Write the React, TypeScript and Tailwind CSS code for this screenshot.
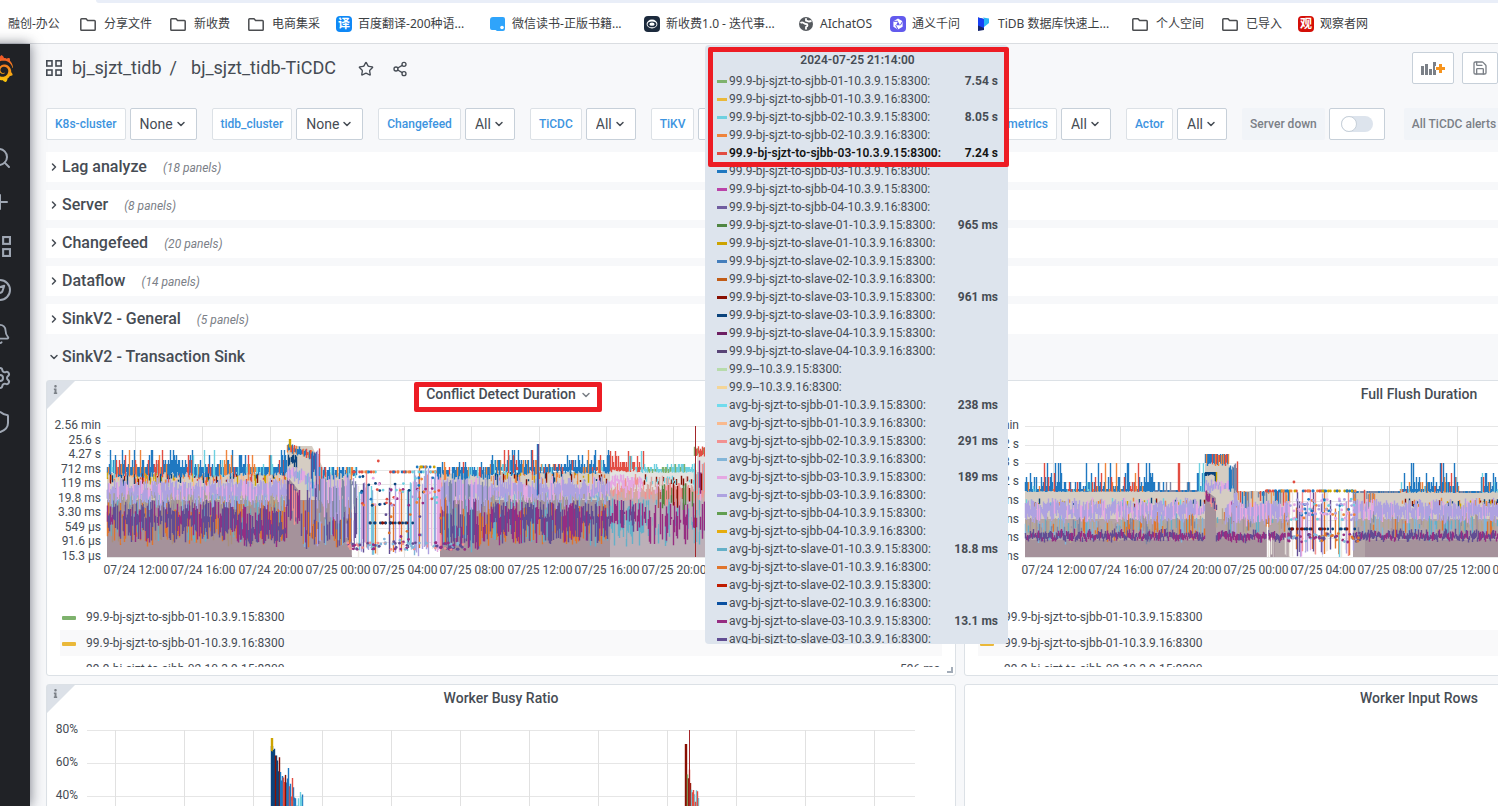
import type { ReactNode } from "react";
import { Bell, ChevronDown, ChevronRight, Compass, Plus, Save, Search, Settings, Share2, Shield, Star } from "lucide-react";
import { FaInfo } from "react-icons/fa";
import { SiGrafana } from "react-icons/si";

/* ---------- chart helpers ---------- */

type Strip = {
  from: number
  to: number
  top: number[]
  bottom: [number, number]
  colors: string[]
  density?: number
  slope?: number
  flat?: boolean
}

type Dots = { from: number; to: number; ys: number[]; colors: string[]; count: number; jitter?: number }

type Area = { points: string; color: string }

function makeRandom(seed: number) {
  let a = seed
  return () => {
    a = (a + 0x6d2b79f5) | 0
    let t = Math.imul(a ^ (a >>> 15), 1 | a)
    t = (t + Math.imul(t ^ (t >>> 7), 61 | t)) ^ t
    return ((t ^ (t >>> 14)) >>> 0) / 4294967296
  }
}

// one vertical stroke per pixel column, grouped by colour
function stripPaths(s: Strip, seed: number) {
  const rnd = makeRandom(seed)
  const paths: Record<string, string> = {}
  for (let x = s.from; x < s.to; x++) {
    if (rnd() > (s.density ?? 1)) continue
    const color = s.colors[Math.floor(rnd() * s.colors.length)]
    const drop = (s.slope ?? 0) * (x - s.from) + (s.flat ? 0 : (rnd() - 0.5) * 5)
    const top = s.top[Math.floor(rnd() * s.top.length)] + drop
    const bottom = s.bottom[0] + rnd() * (s.bottom[1] - s.bottom[0]) + drop
    paths[color] = (paths[color] ?? "") + `M${x + 0.5} ${top.toFixed(1)}V${Math.min(131, Math.max(bottom, top + 2)).toFixed(1)}`
  }
  return Object.entries(paths)
}

function Plot({ areas = [], strips = [], dots = [] }: { areas?: Area[]; strips?: Strip[]; dots?: Dots[] }) {
  return (
    <>
      {areas.map((a, i) => <polygon key={i} points={a.points} fill={a.color} />)}
      {strips.map((s, i) => (
        <g key={i}>
          {stripPaths(s, 97 + i * 31).map(([color, d]) => <path key={color} d={d} stroke={color} strokeWidth="1.4" fill="none" />)}
        </g>
      ))}
      {dots.map((group, i) => {
        const rnd = makeRandom(500 + i * 13)
        return (
          <g key={i}>
            {Array.from({ length: group.count }, (_, k) => (
              <circle
                key={k}
                cx={group.from + rnd() * (group.to - group.from)}
                cy={group.ys[Math.floor(rnd() * group.ys.length)] + (rnd() - 0.5) * (group.jitter ?? 0)}
                r="1.4"
                fill={group.colors[Math.floor(rnd() * group.colors.length)]}
              />
            ))}
          </g>
        )
      })}
    </>
  )
}

/* ---------- chart data ---------- */

const BLUE = "#1f78c1"
const RED = "#e24d42"
const ORANGE = "#ef843c"
const RUST = "#e0752d"
const CYAN = "#6ed0e0"
const SKY = "#82b5d8"
const TEAL = "#64b0c8"
const GREEN = "#7eb26d"
const GOLD = "#cca300"
const NAVY = "#0a437c"
const MAROON = "#890f02"
const PLUM = "#962d82"
const VIOLET = "#614d93"
const LILAC = "#aea2e0"
const PINK = "#e5a8e2"
const SALMON = "#f29191"
const BEIGE = "#d5cdc3"
const MAUVE = "#a5929b"
const STEEL = "#7c88a5"
const PALE = "#ece7e0"

const topColors = [BLUE, BLUE, BLUE, BLUE, BLUE, BLUE, RED, ORANGE, CYAN]
const gapColors = [LILAC, LILAC, PINK, CYAN, RUST, VIOLET, SKY, SALMON, PALE, PALE, PALE]

const conflictAreas: Area[] = [
  { points: "0,47 180,47 180,20 205,20 218,46 245,48 245,131 0,131", color: BEIGE },
  { points: "333,48 383,46 503,46 503,131 333,131", color: BEIGE },
  { points: "503,44 590,44 590,26 598,26 598,131 503,131", color: "#e2e3e0" },
  { points: "0,74 180,74 180,50 193,66 193,74 245,74 245,131 0,131", color: MAUVE },
  { points: "333,74 503,74 503,131 333,131", color: MAUVE },
  { points: "503,66 590,66 590,46 598,46 598,131 503,131", color: "#bcb0b8" },
]

const conflictStrips: Strip[] = [
  // steady region
  { from: 0, to: 180, top: [76, 84, 90], bottom: [104, 118], colors: [RUST, RUST, TEAL, "#a78f7c", MAUVE], density: 0.75 },
  { from: 0, to: 130, top: [74, 78, 84, 90], bottom: [90, 116], colors: [PLUM, VIOLET, VIOLET], density: 0.92 },
  { from: 130, to: 180, top: [80, 88, 96, 102], bottom: [106, 120], colors: [PLUM, VIOLET, VIOLET] },
  { from: 0, to: 180, top: [64, 68], bottom: [70, 84], colors: [SKY, "#b5a68f", "#9c9a9d", LILAC, "#b5a68f"], density: 0.8 },
  { from: 0, to: 180, top: [46, 48, 52], bottom: [50, 60], colors: [ORANGE, RED, MAROON, GOLD, NAVY, BEIGE, BEIGE, "#f9ba8f", "#f9ba8f"], density: 0.8 },
  { from: 0, to: 180, top: [54, 56, 59, 62], bottom: [66, 76], colors: [LILAC, LILAC, LILAC, LILAC, PINK] },
  { from: 0, to: 130, top: [41, 41, 41, 38, 38, 34, 34, 29, 24], bottom: [46, 52], colors: topColors, flat: true },
  { from: 130, to: 172, top: [41, 41, 41, 41, 41, 38, 29], bottom: [46, 50], colors: topColors, flat: true },
  { from: 172, to: 180, top: [41, 34, 29, 24], bottom: [46, 50], colors: topColors, flat: true },
  // restart bump
  { from: 180, to: 193, top: [54, 57], bottom: [70, 92], colors: [PLUM, VIOLET, VIOLET, SALMON], slope: 1 },
  { from: 180, to: 190, top: [30, 32], bottom: [36, 42], colors: [NAVY, NAVY, GOLD, MAROON], density: 0.8 },
  { from: 180, to: 198, top: [42, 44], bottom: [48, 54], colors: [LILAC, LILAC, PINK, SKY], slope: 0.2 },
  { from: 198, to: 212, top: [46, 50], bottom: [52, 66], colors: [LILAC, LILAC, PINK, SKY], slope: 0.8 },
  { from: 180, to: 206, top: [18, 19, 20, 17], bottom: [23, 27], colors: [BLUE, BLUE, BLUE, ORANGE, RED], slope: 0.3, flat: true },
  { from: 182, to: 184, top: [13], bottom: [20, 22], colors: [GOLD], flat: true },
  { from: 204, to: 213, top: [24, 28], bottom: [42, 70], colors: [BLUE, BLUE, VIOLET, LILAC, RED] },
  // fade into the gap
  { from: 193, to: 250, top: [64, 72, 86, 96, 102], bottom: [108, 122], colors: [PLUM, VIOLET, VIOLET, SKY, RUST, LILAC], density: 0.9 },
  { from: 210, to: 250, top: [50, 54, 60], bottom: [70, 96], colors: [LILAC, LILAC, PINK, STEEL], density: 0.95 },
  { from: 212, to: 250, top: [41, 41, 44], bottom: [47, 54], colors: topColors, density: 0.9, flat: true },
  { from: 236, to: 252, top: [60, 112], bottom: [129, 131], colors: ["#ffffff", PALE], density: 0.3 },
  { from: 250, to: 262, top: [46, 52, 58, 64], bottom: [112, 131], colors: gapColors, density: 0.7 },
  { from: 262, to: 304, top: [46, 58, 64, 80], bottom: [120, 131], colors: gapColors, density: 0.38 },
  { from: 304, to: 336, top: [44, 50, 58], bottom: [118, 131], colors: [LILAC, LILAC, PINK, SKY, RUST, SALMON, PALE, "#ffffff"], density: 0.7 },
  // recovery
  { from: 333, to: 383, top: [72, 80, 88, 100], bottom: [106, 124], colors: [PLUM, VIOLET, VIOLET, RUST, TEAL] },
  { from: 333, to: 383, top: [52, 56, 60], bottom: [68, 88], colors: [LILAC, LILAC, LILAC, PINK, STEEL] },
  { from: 330, to: 383, top: [41, 41, 44, 36], bottom: [47, 54], colors: topColors, density: 0.95, flat: true },
  { from: 383, to: 503, top: [76, 84, 90], bottom: [104, 120], colors: [RUST, RUST, TEAL, MAUVE], density: 0.8 },
  { from: 383, to: 503, top: [74, 78, 84, 90], bottom: [92, 118], colors: [PLUM, VIOLET, VIOLET], density: 0.92 },
  { from: 383, to: 503, top: [64, 68], bottom: [70, 82], colors: [SKY, "#b5a68f", "#9c9a9d", LILAC], density: 0.8 },
  { from: 383, to: 503, top: [46, 48, 52], bottom: [50, 60], colors: [ORANGE, MAROON, GOLD, NAVY, BEIGE, BEIGE, BEIGE], density: 0.7 },
  { from: 383, to: 503, top: [52, 56, 59, 62], bottom: [66, 76], colors: [LILAC, LILAC, LILAC, LILAC, PINK] },
  { from: 383, to: 430, top: [41, 38, 34, 34, 29, 24], bottom: [44, 50], colors: topColors, flat: true },
  { from: 430, to: 432, top: [18], bottom: [60, 70], colors: [BLUE, VIOLET], flat: true },
  { from: 432, to: 460, top: [41, 41, 38, 38], bottom: [44, 48], colors: topColors, flat: true },
  { from: 460, to: 503, top: [41, 41, 38, 34, 29, 24], bottom: [44, 48], colors: topColors, flat: true },
  // single node left
  { from: 503, to: 598, top: [74, 82, 90, 96], bottom: [96, 122], colors: [TEAL, TEAL, "#bcb0b8"], density: 0.7 },
  { from: 503, to: 540, top: [76, 82, 88], bottom: [90, 106], colors: [PLUM, PLUM, VIOLET], density: 0.75 },
  { from: 540, to: 598, top: [78, 86, 92], bottom: [92, 120], colors: [PLUM, PLUM, "#bcb0b8"], density: 0.75 },
  { from: 503, to: 598, top: [58, 62, 64], bottom: [66, 76], colors: [SALMON, "#d9a6a0", PINK, "#d9a6a0"] },
  { from: 550, to: 587, top: [58, 64], bottom: [70, 84], colors: [MAROON, "#508642", SALMON, "#b05b4a"], density: 0.6 },
  { from: 503, to: 537, top: [50, 54], bottom: [56, 66], colors: [PINK, PINK, PINK, SALMON] },
  { from: 537, to: 587, top: [50, 53], bottom: [55, 60], colors: [MAROON, CYAN, "#d9a6a0"], density: 0.6 },
  { from: 503, to: 537, top: [41, 41, 36, 30, 25], bottom: [43, 47], colors: [RED, RED, RED, CYAN], flat: true },
  { from: 537, to: 587, top: [41, 41, 43, 38], bottom: [45, 47], colors: [CYAN, CYAN, CYAN, GREEN], flat: true },
  { from: 587, to: 598, top: [22, 24], bottom: [27, 32], colors: [RED, RED, GREEN] },
  { from: 587, to: 598, top: [36, 46], bottom: [56, 70], colors: [MAROON, CYAN, SALMON, PLUM] },
]

const dotColors = [RED, BLUE, CYAN, ORANGE, PLUM, NAVY, PINK, LILAC]

const conflictDots: Dots[] = [
  { from: 245, to: 333, ys: [46], colors: [RED, RED, BLUE, ORANGE, CYAN], count: 36 },
  { from: 304, to: 330, ys: [41], colors: [BLUE, ORANGE, GOLD], count: 8 },
  { from: 250, to: 333, ys: [52, 58, 64, 66, 72, 78], colors: dotColors, count: 66, jitter: 3 },
  { from: 262, to: 306, ys: [97], colors: [NAVY, MAROON, NAVY], count: 20 },
  { from: 262, to: 340, ys: [91, 108, 116], colors: [PLUM, VIOLET, RUST, SKY], count: 16, jitter: 6 },
  { from: 240, to: 360, ys: [120], colors: [VIOLET, PLUM, VIOLET, SKY, SALMON], count: 90, jitter: 7 },
  { from: 268, to: 272, ys: [35], colors: [RED], count: 1 },
]

const flushAreas: Area[] = [
  { points: "0,65 180,65 180,38 204,38 212,65 265,65 265,131 0,131", color: BEIGE },
  { points: "328,65 473,65 473,131 328,131", color: BEIGE },
  { points: "0,93 265,93 265,131 0,131", color: "#b3a5a8" },
  { points: "328,93 473,93 473,131 328,131", color: "#b3a5a8" },
  { points: "0,114 180,114 180,64 191,72 191,112 250,114 250,131 0,131", color: MAUVE },
  { points: "340,114 473,114 473,131 340,131", color: MAUVE },
]

const flushMid = [RUST, SKY, "#b5a68f", "#b5a68f", MAUVE, STEEL, TEAL]
const flushSpikes = [63, 63, 60, 60, 56, 56, 51, 47, 37]

const flushStrips: Strip[] = [
  { from: 0, to: 180, top: [88, 93, 96, 102], bottom: [102, 116], colors: flushMid, density: 0.75 },
  { from: 0, to: 180, top: [74, 76], bottom: [77, 82], colors: [GOLD, NAVY, MAROON, ORANGE, CYAN], density: 0.35 },
  { from: 0, to: 180, top: [74, 77, 79, 82], bottom: [86, 96], colors: [LILAC, LILAC, LILAC, LILAC, PINK] },
  { from: 0, to: 180, top: [105, 107, 109], bottom: [112, 114], colors: [VIOLET, VIOLET, PLUM] },
  { from: 0, to: 40, top: flushSpikes, bottom: [65, 66], colors: topColors, flat: true },
  { from: 40, to: 70, top: [63, 63, 56], bottom: [65, 66], colors: topColors, flat: true },
  { from: 58, to: 130, top: flushSpikes, bottom: [65, 66], colors: topColors, flat: true },
  { from: 130, to: 172, top: [64, 64, 64, 64, 64, 64, 64, 56], bottom: [65, 66], colors: [BLUE, STEEL, STEEL], flat: true },
  { from: 153, to: 155, top: [37], bottom: [65, 66], colors: [RED], flat: true },
  { from: 172, to: 180, top: [60, 47, 37], bottom: [65, 66], colors: [BLUE, BLUE, CYAN], flat: true },
  { from: 180, to: 204, top: [28, 28, 29], bottom: [36, 40], colors: [BLUE, BLUE, BLUE, BLUE, RED, ORANGE], flat: true },
  { from: 180, to: 190, top: [46], bottom: [48, 50], colors: [NAVY], flat: true },
  { from: 190, to: 192, top: [46], bottom: [56, 58], colors: [NAVY, GOLD], flat: true },
  { from: 180, to: 206, top: [55, 58], bottom: [60, 66], colors: [LILAC, LILAC, PINK] },
  { from: 180, to: 192, top: [64, 66], bottom: [68, 74], colors: [PLUM, VIOLET, SALMON], slope: 1 },
  { from: 204, to: 213, top: [37, 42], bottom: [60, 70], colors: [BLUE, BLUE, STEEL, RED] },
  { from: 206, to: 213, top: [68, 76], bottom: [88, 108], colors: [LILAC, PLUM, LILAC] },
  { from: 191, to: 265, top: [82, 88, 93], bottom: [96, 108], colors: flushMid, density: 0.5 },
  { from: 213, to: 265, top: [65, 66], bottom: [67, 84], colors: [BLUE, ORANGE, STEEL, RED, BEIGE], density: 0.8, flat: true },
  { from: 200, to: 265, top: [76, 80], bottom: [86, 98], colors: [LILAC, LILAC, PINK] },
  { from: 191, to: 268, top: [106, 108], bottom: [112, 115], colors: [VIOLET, PLUM] },
  { from: 240, to: 265, top: [96, 114], bottom: [129, 131], colors: ["#ffffff", PALE, "#c5b9bd"], density: 0.45 },
  { from: 265, to: 330, top: [66, 76, 84], bottom: [124, 131], colors: [...gapColors, "#ffffff", PALE], density: 0.36 },
  { from: 328, to: 375, top: [88, 93, 100], bottom: [102, 114], colors: flushMid, density: 0.5 },
  { from: 328, to: 375, top: [65], bottom: [66, 67], colors: [STEEL, STEEL, BLUE], flat: true },
  { from: 328, to: 350, top: [66], bottom: [72, 100], colors: [STEEL, ORANGE, BEIGE, RED], density: 0.5 },
  { from: 372, to: 473, top: [88, 93, 96], bottom: [100, 114], colors: flushMid, density: 0.75 },
  { from: 375, to: 473, top: [74, 76], bottom: [77, 82], colors: [GOLD, NAVY, MAROON, ORANGE], density: 0.35 },
  { from: 328, to: 473, top: [74, 77, 79, 82], bottom: [86, 96], colors: [LILAC, LILAC, LILAC, LILAC, PINK] },
  { from: 328, to: 473, top: [105, 107, 109], bottom: [112, 114], colors: [VIOLET, VIOLET, PLUM] },
  { from: 375, to: 434, top: flushSpikes, bottom: [65, 67], colors: topColors, flat: true },
  { from: 434, to: 456, top: [65], bottom: [66, 67], colors: [STEEL, BLUE], flat: true },
  { from: 456, to: 473, top: flushSpikes, bottom: [65, 67], colors: topColors, flat: true },
]

const flushDots: Dots[] = [
  { from: 240, to: 332, ys: [65], colors: [RED, BLUE, ORANGE, BLUE, GOLD], count: 50 },
  { from: 262, to: 330, ys: [74, 79, 84, 88, 93], colors: [LILAC, LILAC, CYAN, PINK, PINK, ORANGE, BLUE], count: 90, jitter: 2 },
  { from: 262, to: 335, ys: [103], colors: [NAVY, NAVY, MAROON], count: 24 },
  { from: 262, to: 335, ys: [110, 113], colors: [VIOLET, PLUM, RUST, SKY], count: 60, jitter: 6 },
  { from: 268, to: 271, ys: [56], colors: [RED], count: 1 },
]

const busyStrips: Strip[] = [
  { from: 184, to: 186, top: [16], bottom: [130, 131], colors: [NAVY], flat: true },
  { from: 184, to: 186, top: [8], bottom: [16, 30], colors: [GOLD, MAROON], flat: true },
  { from: 186, to: 193, top: [16, 22, 30], bottom: [130, 131], colors: [NAVY, MAROON, NAVY, MAROON, "#2f575e"], slope: 2 },
  { from: 193, to: 203, top: [32, 42, 48], bottom: [130, 131], colors: [MAROON, RED, BLUE, "#508642", BLUE], slope: 1 },
  { from: 203, to: 217, top: [54, 62, 68], bottom: [130, 131], colors: [BLUE, BLUE, BLUE, RED, CYAN], slope: 1 },
  { from: 205, to: 206, top: [48], bottom: [130, 131], colors: [RED], flat: true },
  { from: 598, to: 600, top: [14], bottom: [130, 131], colors: [MAROON], flat: true },
  { from: 600, to: 604, top: [36, 44], bottom: [130, 131], colors: [MAROON, GREEN, RED], slope: 3 },
  { from: 604, to: 612, top: [56, 60, 66], bottom: [130, 131], colors: [RED, RED, CYAN, GREEN], slope: 1 },
]

const timeLabels = [
  "07/24 12:00", "07/24 16:00", "07/24 20:00", "07/25 00:00", "07/25 04:00", "07/25 08:00",
  "07/25 12:00", "07/25 16:00", "07/25 20:00",
]

type ChartProps = {
  name: string
  yLabels: string[]
  rowGap: number
  left: number
  labelGap: number
  width: number
  tickGap: number
  ticks: number
  times?: string[]
  crosshair?: number
  children: ReactNode
}

function Chart({ name, yLabels, rowGap, left, labelGap, width, tickGap, ticks, times = [], crosshair, children }: ChartProps) {
  const height = 131
  return (
    <svg role="img" aria-label={name} className="block w-full h-[195px] text-xs fill-[#464c54]">
      {yLabels.map((label, i) => (
        <text key={label} x={left - labelGap} y={20 + Math.round(i * rowGap)} textAnchor="end">{label}</text>
      ))}
      <g transform={`translate(${left} 17)`}>
        {yLabels.map((label, i) => (
          <path key={label} d={`M0 ${Math.round(i * rowGap) + 0.5}H${width}`} stroke="#e6e6e6" />
        ))}
        {Array.from({ length: ticks }, (_, i) => (
          <path key={i} d={`M${Math.round(28 + i * tickGap) + 0.5} 0V${height}`} stroke="#e1e1e1" />
        ))}
        {children}
        {crosshair && <path d={`M${crosshair + 0.5} 0V${height}`} stroke="#a3262a" />}
      </g>
      {times.map((time, i) => (
        <text key={time} x={left + Math.round(29 + i * tickGap)} y="165" textAnchor="middle">{time}</text>
      ))}
    </svg>
  )
}

/* ---------- small pieces ---------- */

function AppsIcon({ size }: { size: number }) {
  return (
    <svg width={size} height={size} viewBox="0 0 16 16" fill="none" stroke="currentColor" strokeWidth="1.6">
      <rect x="0.8" y="0.8" width="5.2" height="5.2" />
      <rect x="10" y="0.8" width="5.2" height="5.2" />
      <rect x="0.8" y="10" width="5.2" height="5.2" />
      <rect x="10" y="10" width="5.2" height="5.2" />
    </svg>
  )
}

const folder = (
  <span className="w-5 flex justify-center">
    <svg width="16" height="13" viewBox="0 0 16 13" fill="none" stroke="#4b4d50" strokeWidth="1.5">
      <path d="M0.8 11.4V1.6Q0.8 0.8 1.6 0.8H6L7.6 2.6H14.4Q15.2 2.6 15.2 3.4V11.4Q15.2 12.2 14.4 12.2H1.6Q0.8 12.2 0.8 11.4Z" />
    </svg>
  </span>
)

const bookmarks: { label: string; icon?: ReactNode; width?: string }[] = [
  { label: "融创-办公", width: "w-[54px]" },
  { label: "分享文件", icon: folder },
  { label: "新收费", icon: folder },
  { label: "电商集采", icon: folder },
  {
    label: "百度翻译-200种语...",
    width: "w-[138px]",
    icon: <span className="size-4 rounded-sm bg-[#0f88f6] text-white font-bold text-xs leading-4 text-center">译</span>,
  },
  {
    label: "微信读书-正版书籍...",
    width: "w-[138px]",
    icon: (
      <svg width="16" height="16" viewBox="0 0 16 16">
        <path d="M3 1H13Q15 1 15 3V13Q15 15 13 15H7L5.5 14H2Q0 14 0 12V4Q0 1 3 1Z" fill="#2fa4fb" />
        <circle cx="12" cy="11.5" r="1.8" fill="#fff" />
      </svg>
    ),
  },
  {
    label: "新收费1.0 - 迭代事...",
    width: "w-[138px]",
    icon: (
      <svg width="16" height="16" viewBox="0 0 16 16">
        <rect width="16" height="16" rx="4" fill="#1c2a3d" />
        <ellipse cx="8" cy="8" rx="5.4" ry="4.4" fill="#fff" />
        <ellipse cx="8" cy="8.4" rx="4.4" ry="2.8" fill="#1c2a3d" />
        <ellipse cx="8" cy="8.2" rx="2.6" ry="1.6" fill="#fff" />
      </svg>
    ),
  },
  {
    label: "AIchatOS",
    width: "w-[76px]",
    icon: (
      <svg width="16" height="16" viewBox="0 0 16 16">
        <circle cx="8" cy="8" r="7" fill="#55595e" />
        <path d="M2.5 7C5 5 6 8 8 8C10 8 10 10 8 11V13.5" fill="none" stroke="#fff" strokeWidth="1.8" />
        <path d="M8 2.2V4.5L11 5.5L13.5 5" fill="none" stroke="#fff" strokeWidth="1.8" />
      </svg>
    ),
  },
  {
    label: "通义千问",
    icon: (
      <svg width="16" height="16" viewBox="0 0 16 16">
        <rect width="16" height="16" rx="4" fill="#625aed" />
        <path d="M8 2.6L12.6 5.3V10.7L8 13.4L3.4 10.7V5.3Z" fill="#fff" />
        <path d="M8 5.5L10 9.2H6Z" fill="#625aed" />
        <path d="M3.4 5.3H8M12.6 5.3L10.3 9.3M8 13.4L5.6 9.4" stroke="#625aed" />
      </svg>
    ),
  },
  {
    label: "TiDB 数据库快速上...",
    width: "w-[138px]",
    icon: (
      <svg width="16" height="16" viewBox="0 0 16 16">
        <path d="M2 1.5L8 3V14L2 15Z" fill="#16256e" />
        <path d="M2 1.5L8 3V12L2 9.5Z" fill="#1740f5" />
        <path d="M7 1.5L13 2.5V7L8 11V3Z" fill="#28b6f6" />
      </svg>
    ),
  },
  { label: "个人空间", icon: folder },
  { label: "已导入", icon: folder },
  {
    label: "观察者网",
    icon: <span className="size-4 rounded-sm bg-[#d40f07] text-white font-bold text-xs leading-4 text-center">观</span>,
  },
]

function BookmarkBar() {
  return (
    <nav className="shrink-0 h-11 bg-white border-b border-[#dadde1]">
      <div className="h-[3px] ml-24 rounded-bl-full bg-[#e9eef8]" />
      <div className="h-10 pl-2 pt-0.5 flex items-center gap-4 text-xs text-[#3c4043] font-['Noto_Sans','Noto_Sans_CJK_SC',sans-serif]">
        {bookmarks.map(({ label, icon, width = "" }) => (
          <a key={label} href="#" className={`shrink-0 flex items-center gap-1.5 whitespace-nowrap ${width}`}>
            {icon}
            <span>{label}</span>
          </a>
        ))}
      </div>
    </nav>
  )
}

function Sidebar() {
  const icons = [
    { name: "Search", icon: <Search size={24} /> },
    { name: "Create", icon: <Plus size={24} /> },
    { name: "Dashboards", icon: <AppsIcon size={21} /> },
    { name: "Explore", icon: <Compass size={24} /> },
    { name: "Alerting", icon: <Bell size={22} /> },
    { name: "Configuration", icon: <Settings size={24} /> },
    { name: "Server Admin", icon: <Shield size={24} /> },
  ]
  return (
    <aside className="relative z-10 shrink-0 w-[60px] -ml-[30px] bg-[#202226] text-[#9fa7b3] shadow-[0_0_12px_rgba(30,35,50,0.6)]">
      <a href="#" aria-label="Home" className="h-12 mb-11 flex items-center justify-center">
        <svg width="0" height="0">
          <linearGradient id="flame" x1="0" y1="0" x2="0" y2="1">
            <stop offset="0.1" stopColor="#f05a28" />
            <stop offset="1" stopColor="#fbca0a" />
          </linearGradient>
        </svg>
        <SiGrafana size={27} className="fill-[url(#flame)]" />
      </a>
      {icons.map(({ name, icon }) => (
        <button key={name} aria-label={name} className="w-full h-11 flex items-center justify-center">{icon}</button>
      ))}
    </aside>
  )
}

function Header() {
  return (
    <header className="h-12 pl-4 flex items-center text-lg text-[#464c54]">
      <AppsIcon size={16} />
      <a href="#" className="ml-2.5">bj_sjzt_tidb</a>
      <span className="mx-2">/</span>
      <a href="#" className="ml-1.5">bj_sjzt_tidb-TiCDC</a>
      <button aria-label="Mark as favorite" className="ml-[22px] pt-0.5"><Star size={16} /></button>
      <button aria-label="Share dashboard" className="ml-[18px] pt-0.5"><Share2 size={16} /></button>
      <button aria-label="Add panel" className="ml-auto w-[42px] h-8 flex items-center justify-center bg-white border border-[#c7d0d9] rounded-xs">
        <svg width="26" height="16" viewBox="0 0 26 16" fill="#7b8087">
          <path d="M1 6H4V15H1ZM5 4H8V15H5ZM9 9H12V15H9ZM13 2H16V6H15V10H16V15H13Z" />
          <path d="M19 4H22V7H25V10H22V13H19V10H16V7H19Z" fill="#f7941d" />
        </svg>
      </button>
      <button aria-label="Save dashboard" className="ml-2 w-9 h-8 flex items-center justify-center bg-white border border-[#c7d0d9] rounded-xs text-[#7b8087]">
        <Save size={16} />
      </button>
    </header>
  )
}

function Variable({ name, value, className = "" }: { name: string; value: string; className?: string }) {
  return (
    <div className={`shrink-0 flex gap-1 ${className}`}>
      <label htmlFor={name} className="h-8 px-2 flex items-center whitespace-nowrap bg-white border border-[#dce1e6] rounded-xs text-xs font-medium text-[#3d94e0]">
        {name}
      </label>
      <div className="relative">
        <select
          id={name}
          className={`h-8 pl-[9px] appearance-none bg-white border border-[#c7d0d9] rounded-xs text-sm text-[#464c54] ${value === "None" ? "w-[67px]" : "w-[50px]"}`}
        >
          <option>{value}</option>
        </select>
        <ChevronDown size={12} strokeWidth={3} className="absolute right-2.5 top-2.5 pointer-events-none text-[#464c54]" />
      </div>
    </div>
  )
}

function Variables() {
  return (
    <form className="pl-4 mt-4 flex gap-[15px]">
      <Variable name="K8s-cluster" value="None" />
      <Variable name="tidb_cluster" value="None" />
      <Variable name="Changefeed" value="All" />
      <Variable name="TiCDC" value="All" />
      <Variable name="TiKV" value="All" />
      <Variable name="Runtime metrics" value="All" className="ml-[187px]" />
      <Variable name="Actor" value="All" />
      <div className="shrink-0 flex gap-1">
        <label htmlFor="server-down" className="h-8 px-2 flex items-center bg-[#f1f4f8] rounded-xs text-xs font-medium text-[#7b8087]">Server down</label>
        <span className="w-14 h-8 flex items-center justify-center bg-white border border-[#c7d0d9] rounded-xs">
          <input
            id="server-down"
            type="checkbox"
            className="appearance-none w-8 h-4 rounded-full bg-[#dde4ed] flex before:size-4 before:rounded-full before:bg-white before:border before:border-[#c7d0d9]"
          />
        </span>
      </div>
      <label className="shrink-0 ml-1 h-8 px-2 flex items-center bg-[#f1f4f8] rounded-xs text-xs font-medium text-[#7b8087]">All TiCDC alerts</label>
    </form>
  )
}

const rows = [
  { title: "Lag analyze", panels: 18 },
  { title: "Server", panels: 8 },
  { title: "Changefeed", panels: 20 },
  { title: "Dataflow", panels: 14 },
  { title: "SinkV2 - General", panels: 5 },
]

function Panel({ title, info, boxed, children }: { title: string; info?: boolean; boxed?: boolean; children?: ReactNode }) {
  return (
    <section className="relative h-[296px] bg-white border border-[#dce1e6] rounded-[3px]">
      {info && (
        <span className="absolute left-0 top-0 size-7 pl-1 pt-1 bg-[#dce1e8] text-[#7b8087] [clip-path:polygon(0_0,100%_0,0_100%)]">
          <FaInfo size={9} />
        </span>
      )}
      <h2 className="h-7 flex justify-center text-sm leading-[27px] font-medium text-[#464c54]">
        <span className="relative">
          {title}
          {boxed && (
            <>
              <ChevronDown size={12} strokeWidth={3} className="absolute left-full top-2 ml-1 text-[#7b8087]" />
              <span className="absolute -left-3 -right-[26px] top-px h-[30px] border-[5px] border-[#ed1c24] rounded-xs" />
            </>
          )}
        </span>
      </h2>
      {children}
    </section>
  )
}

function Legend({ value }: { value?: string }) {
  const entries = [
    { name: "99.9-bj-sjzt-to-sjbb-01-10.3.9.15:8300", color: "bg-[#7eb26d]" },
    { name: "99.9-bj-sjzt-to-sjbb-01-10.3.9.16:8300", color: "bg-[#eab839]" },
    { name: "99.9-bj-sjzt-to-sjbb-02-10.3.9.15:8300", color: "bg-[#6ed0e0]", value },
  ]
  return (
    <div className="h-[63px] px-[13px] overflow-hidden">
      <table className="w-full text-xs text-[#464c54]">
        <tbody>
          {entries.map((entry) => (
            <tr key={entry.name} className="h-[26px] even:bg-[#f9f9fa]">
              <td className="w-[26px] pl-0.5 pt-0.5"><span className={`block w-3.5 h-1 rounded-[1px] ${entry.color}`} /></td>
              <td>{entry.name}</td>
              <td className="text-right pr-0.5">{entry.value}</td>
            </tr>
          ))}
        </tbody>
      </table>
    </div>
  )
}

const tooltipRows: { name: string; color: string; value?: string; active?: boolean }[] = [
  { name: "99.9-bj-sjzt-to-sjbb-01-10.3.9.15:8300:", color: "bg-[#7eb26d]", value: "7.54 s" },
  { name: "99.9-bj-sjzt-to-sjbb-01-10.3.9.16:8300:", color: "bg-[#eab839]" },
  { name: "99.9-bj-sjzt-to-sjbb-02-10.3.9.15:8300:", color: "bg-[#6ed0e0]", value: "8.05 s" },
  { name: "99.9-bj-sjzt-to-sjbb-02-10.3.9.16:8300:", color: "bg-[#ef843c]" },
  { name: "99.9-bj-sjzt-to-sjbb-03-10.3.9.15:8300:", color: "bg-[#e24d42]", value: "7.24 s", active: true },
  { name: "99.9-bj-sjzt-to-sjbb-03-10.3.9.16:8300:", color: "bg-[#1f78c1]" },
  { name: "99.9-bj-sjzt-to-sjbb-04-10.3.9.15:8300:", color: "bg-[#ba43a9]" },
  { name: "99.9-bj-sjzt-to-sjbb-04-10.3.9.16:8300:", color: "bg-[#705da0]" },
  { name: "99.9-bj-sjzt-to-slave-01-10.3.9.15:8300:", color: "bg-[#508642]", value: "965 ms" },
  { name: "99.9-bj-sjzt-to-slave-01-10.3.9.16:8300:", color: "bg-[#cca300]" },
  { name: "99.9-bj-sjzt-to-slave-02-10.3.9.15:8300:", color: "bg-[#447ebc]" },
  { name: "99.9-bj-sjzt-to-slave-02-10.3.9.16:8300:", color: "bg-[#c15c17]" },
  { name: "99.9-bj-sjzt-to-slave-03-10.3.9.15:8300:", color: "bg-[#890f02]", value: "961 ms" },
  { name: "99.9-bj-sjzt-to-slave-03-10.3.9.16:8300:", color: "bg-[#0a437c]" },
  { name: "99.9-bj-sjzt-to-slave-04-10.3.9.15:8300:", color: "bg-[#6d1f62]" },
  { name: "99.9-bj-sjzt-to-slave-04-10.3.9.16:8300:", color: "bg-[#584477]" },
  { name: "99.9--10.3.9.15:8300:", color: "bg-[#b7dbab]" },
  { name: "99.9--10.3.9.16:8300:", color: "bg-[#f4d598]" },
  { name: "avg-bj-sjzt-to-sjbb-01-10.3.9.15:8300:", color: "bg-[#70dbed]", value: "238 ms" },
  { name: "avg-bj-sjzt-to-sjbb-01-10.3.9.16:8300:", color: "bg-[#f9ba8f]" },
  { name: "avg-bj-sjzt-to-sjbb-02-10.3.9.15:8300:", color: "bg-[#f29191]", value: "291 ms" },
  { name: "avg-bj-sjzt-to-sjbb-02-10.3.9.16:8300:", color: "bg-[#82b5d8]" },
  { name: "avg-bj-sjzt-to-sjbb-03-10.3.9.15:8300:", color: "bg-[#e5a8e2]", value: "189 ms" },
  { name: "avg-bj-sjzt-to-sjbb-03-10.3.9.16:8300:", color: "bg-[#aea2e0]" },
  { name: "avg-bj-sjzt-to-sjbb-04-10.3.9.15:8300:", color: "bg-[#629e51]" },
  { name: "avg-bj-sjzt-to-sjbb-04-10.3.9.16:8300:", color: "bg-[#e5ac0e]" },
  { name: "avg-bj-sjzt-to-slave-01-10.3.9.15:8300:", color: "bg-[#64b0c8]", value: "18.8 ms" },
  { name: "avg-bj-sjzt-to-slave-01-10.3.9.16:8300:", color: "bg-[#e0752d]" },
  { name: "avg-bj-sjzt-to-slave-02-10.3.9.15:8300:", color: "bg-[#bf1b00]" },
  { name: "avg-bj-sjzt-to-slave-02-10.3.9.16:8300:", color: "bg-[#0a50a1]" },
  { name: "avg-bj-sjzt-to-slave-03-10.3.9.15:8300:", color: "bg-[#962d82]", value: "13.1 ms" },
  { name: "avg-bj-sjzt-to-slave-03-10.3.9.16:8300:", color: "bg-[#614d93]" },
]

function GraphTooltip() {
  return (
    <div className="absolute z-20 left-[705px] top-[45px] w-[303px] h-[599px]">
      <div className="h-full pt-1.5 pl-3 pr-2.5 overflow-hidden rounded-[4px] bg-[#dde4ed] text-xs text-[#464c54]">
        <div className="h-[21px] leading-[18px] text-center font-semibold">2024-07-25 21:14:00</div>
        {tooltipRows.map(({ name, color, value, active }) => (
          <div key={name} className={`h-[18px] flex items-center ${active ? "font-semibold text-[#141414]" : ""}`}>
            <span className={`w-2.5 h-[3px] mr-0.5 ${color}`} />
            <span>{name}</span>
            <span className="ml-auto font-bold">{value}</span>
          </div>
        ))}
      </div>
      <span className="absolute left-[3px] -right-px top-0.5 h-[120px] border-[5px] border-[#ed1c24] rounded-xs" />
    </div>
  )
}

export default function App() {
  return (
    <div className="relative h-screen flex flex-col overflow-hidden bg-[#f7f8fa] font-['Roboto',sans-serif]">
      <BookmarkBar />
      <div className="flex-1 min-h-0 flex">
        <Sidebar />
        <main className="flex-1 min-w-0 overflow-hidden">
          <Header />
          <Variables />
          <div className="pl-4 pt-3 flex flex-col gap-2">
            {rows.map(({ title, panels }) => (
              <button key={title} className="h-[30px] pl-0.5 flex items-center bg-white text-left">
                <ChevronRight size={12} strokeWidth={3} className="text-[#464c54]" />
                <span className="ml-0.5 text-base font-medium text-[#464c54]">{title}</span>
                <span className="ml-4 pt-0.5 text-xs italic text-[#7b8087]">({panels} panels)</span>
              </button>
            ))}
            <button className="h-[30px] pl-0.5 flex items-center text-left">
              <ChevronDown size={12} strokeWidth={3} className="text-[#464c54]" />
              <span className="ml-0.5 text-base font-medium text-[#464c54]">SinkV2 - Transaction Sink</span>
            </button>
            <div className="min-w-[1828px] grid grid-cols-2 gap-2">
              <Panel title="Conflict Detect Duration" info boxed>
                <Chart
                  name="Conflict Detect Duration"
                  yLabels={["2.56 min", "25.6 s", "4.27 s", "712 ms", "119 ms", "19.8 ms", "3.30 ms", "549 µs", "91.6 µs", "15.3 µs"]}
                  rowGap={14.55}
                  left={60}
                  labelGap={6}
                  width={835}
                  tickGap={67.25}
                  ticks={9}
                  times={timeLabels}
                  crosshair={588}
                >
                  <Plot areas={conflictAreas} strips={conflictStrips} dots={conflictDots} />
                </Chart>
                <Legend value="596 ms" />
                <span className="absolute right-0.5 bottom-0.5 size-1.5 border-r-2 border-b-2 border-[#a3acb8]" />
              </Panel>
              <Panel title="Full Flush Duration" info>
                <Chart
                  name="Full Flush Duration"
                  yLabels={["1.09 min", "16.2 s", "4.3 s", "1.2 s", "256 ms", "64.0 ms", "16.0 ms", "4.00 ms"]}
                  rowGap={18.7}
                  left={60}
                  labelGap={6}
                  width={835}
                  tickGap={67.25}
                  ticks={9}
                  times={timeLabels}
                >
                  <Plot areas={flushAreas} strips={flushStrips} dots={flushDots} />
                </Chart>
                <Legend />
              </Panel>
              <Panel title="Worker Busy Ratio" info>
                <Chart
                  name="Worker Busy Ratio"
                  yLabels={["80%", "60%", "40%", "20%"]}
                  rowGap={32.8}
                  left={40}
                  labelGap={9}
                  width={828}
                  tickGap={69}
                  ticks={12}
                  crosshair={602}
                >
                  <Plot strips={busyStrips} />
                </Chart>
              </Panel>
              <Panel title="Worker Input Rows" />
            </div>
          </div>
        </main>
      </div>
      <GraphTooltip />
    </div>
  )
}
